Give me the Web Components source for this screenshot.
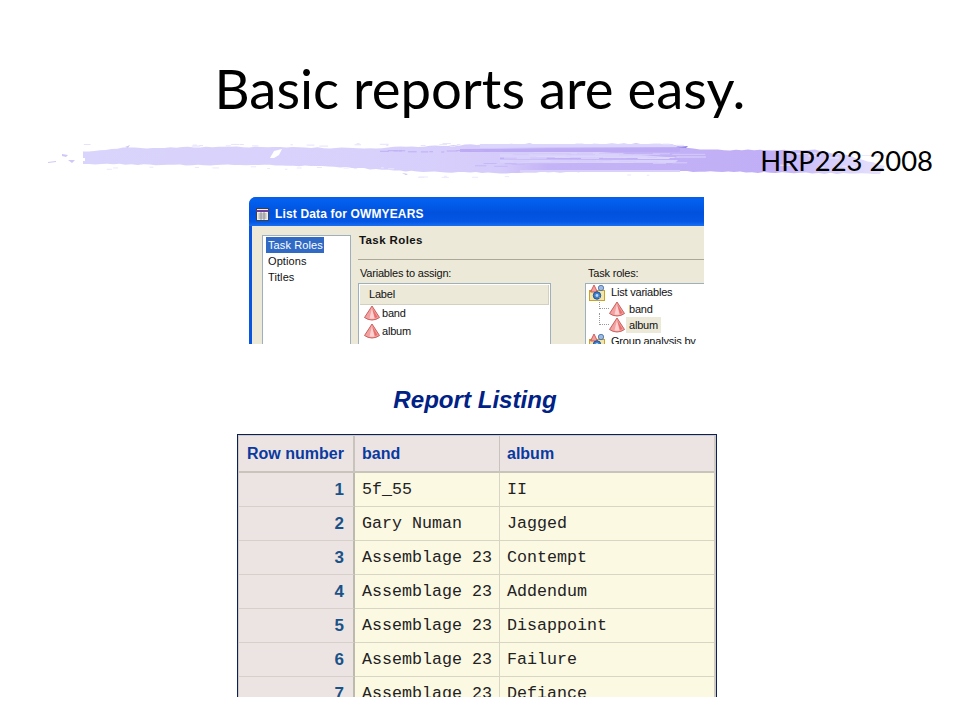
<!DOCTYPE html>
<html>
<head>
<meta charset="utf-8">
<title>Basic reports are easy.</title>
<style>
  html, body { margin: 0; padding: 0; background: #fff; }
</style>
</head>
<body>
<report-slide>
  <slide-header slot="header" heading="Basic reports are easy." tag="HRP223 2008"></slide-header>
  <list-dialog slot="dialog"></list-dialog>
  <report-listing slot="report"></report-listing>
</report-slide>

<script>
// Small seeded generator so the brush stroke comes out the same every run
function seeded(s) {
  return () => { s = (s * 16807) % 2147483647; return s / 2147483647; };
}

// Walks a polyline and roughens it, returns "x y" pairs
function rough(points, step, amount, rnd) {
  const out = [];
  for (let i = 0; i < points.length - 1; i++) {
    const [x0, y0] = points[i];
    const [x1, y1] = points[i + 1];
    const n = Math.max(1, Math.round(Math.abs(x1 - x0) / step));
    for (let k = 0; k < n; k++) {
      const t = k / n;
      out.push(`${(x0 + (x1 - x0) * t).toFixed(1)} ${(y0 + (y1 - y0) * t + (rnd() - 0.5) * amount).toFixed(1)}`);
    }
  }
  const last = points[points.length - 1];
  out.push(`${last[0]} ${last[1]}`);
  return out;
}

function brushMarkup() {
  const rnd = seeded(4711);
  const top = [[83, 152], [100, 150], [123, 148], [200, 147], [280, 147], [330, 148], [370, 148], [430, 146], [500, 144], [600, 144], [672, 144], [680, 147], [700, 150], [760, 150], [815, 150], [850, 156], [885, 166]];
  const bottom = [[880, 174], [800, 173], [740, 172], [640, 171], [560, 172], [500, 173], [440, 172], [400, 171], [340, 167], [270, 165], [180, 165], [83, 164]];
  const body = 'M' + rough(top, 6, 1.4, rnd).concat(rough(bottom, 6, 1.2, rnd)).join(' L') + ' Z';

  // dark strokes and pale streaks of the dry brush
  let strokes = '';
  const bar = (x, y, w, h, fill) => { strokes += `<rect x="${x.toFixed(1)}" y="${y.toFixed(1)}" width="${w.toFixed(1)}" height="${h}" fill="${fill}"/>`; };
  for (let x = 500; x < 675; x += 9 + rnd() * 14) {
    bar(x, 152.5 + rnd() * 2, 14 + rnd() * 22, 1, '#d4c9fa');
    bar(x + 4, 156 + rnd() * 2, 14 + rnd() * 20, 1, '#ded8fc');
    bar(x, 160 + rnd() * 3, 12 + rnd() * 18, 1, '#d6ccfa');
  }
  for (let x = 380; x < 500; x += 5 + rnd() * 8) {
    bar(x, 150 + rnd() * 1.5, 3 + rnd() * 8, 1, '#bfaef5');
  }
  for (let x = 475; x < 520; x += 5 + rnd() * 6) {
    bar(x, 163 + rnd() * 5, 6 + rnd() * 8, 1, '#c6b8f7');
  }
  for (let x = 780; x < 880; x += 6 + rnd() * 8) {
    bar(x, 152 + rnd() * 20, 6 + rnd() * 10, 1, '#ece8fd');
  }
  for (let i = 0; i < 44; i++) {
    const x = 60 + rnd() * 620;
    const above = rnd() > 0.5;
    const y = above ? 143 + rnd() * 3 : (x < 400 ? 166 : 174) + rnd() * 3;
    bar(x, y, 2 + rnd() * 7, 1, above ? '#e6e2fd' : '#ece9fe');
  }

  return `
    <defs>
      <linearGradient id="ink" gradientUnits="userSpaceOnUse" x1="83" x2="885" y1="0" y2="0">
        <stop offset="0" stop-color="#d9d4fc"/>
        <stop offset=".36" stop-color="#d8d1fc"/>
        <stop offset=".52" stop-color="#d6ccfb"/>
        <stop offset=".58" stop-color="#c4b3f6"/>
        <stop offset=".86" stop-color="#c0aff6"/>
        <stop offset=".92" stop-color="#d2c8fa"/>
        <stop offset="1" stop-color="#e8e3fd"/>
      </linearGradient>
    </defs>
    <path fill="url(#ink)" d="${body}"/>
    <path fill="#dcd6fc" d="M480 144 L672 144 L678 147 L480 148 Z"/>
    <path fill="#d9d2fb" d="M500 152 L600 152 L680 158 L675 163 L500 163 Z"/>
    <path fill="#c0aff6" d="M500 157.5 L680 158 L680 160 L500 159.5 Z"/>
    <path fill="#bcaaf5" d="M460 149 L680 148 L680 152 L460 152 Z"/>
    <path fill="#d9d1fb" d="M520 170 L680 170 L680 172 L520 172 Z"/>
    ${strokes}
    <path fill="#fff" d="M274 151 L282 149 L279 155 L274 158 L270 158 Z"/>
    <path fill="#fff" d="M74 158 L85 158 L85 161 L74 161 Z"/>
    <path fill="#cfc8f8" d="M48 162 L56 161 L56 162 L48 163 Z M62 154 L68 155 L66 157 L62 156 Z M68 160 L75 160 L72 163 Z M125 147 L130 145 L128 148 Z"/>
    <path fill="#8f7fe6" d="M676 147 L688 146 L686 148 Z"/>
    <path fill="#c9c1f6" d="M402 173 L408 174 L406 175 Z"/>`;
}

// Slide frame: stacks header, dialog shot and report, clips at the bottom edge
class ReportSlide extends HTMLElement {
  constructor() {
    super();
    this.attachShadow({ mode: 'open' }).innerHTML = `
      <style>
        :host { display: block; width: 960px; height: 720px; overflow: hidden; background: #fff; }
        .stack { display: flex; flex-direction: column; align-items: stretch; }
      </style>
      <div class="stack">
        <slot name="header"></slot>
        <slot name="dialog"></slot>
        <slot name="report"></slot>
      </div>`;
  }
}

// Title, brush stroke and course tag
class SlideHeader extends HTMLElement {
  constructor() {
    super();
    this.attachShadow({ mode: 'open' }).innerHTML = `
      <style>
        :host { display: block; height: 197px; position: relative; font-family: Lato, "Liberation Sans", sans-serif; color: #000; }
        h1 { margin: 0; padding-top: 53px; font-size: 54.5px; font-weight: 400; line-height: 70px; text-align: center; }
        svg { position: absolute; left: 0; top: 130px; filter: blur(.4px); }
        .tag { position: absolute; right: 27px; top: 143px; font-size: 27.4px; line-height: 36px; }
      </style>
      <svg width="960" height="60" viewBox="0 130 960 60">${brushMarkup()}</svg>
      <h1></h1>
      <div class="tag"></div>`;
    this.shadowRoot.querySelector('h1').textContent = this.getAttribute('heading');
    this.shadowRoot.querySelector('.tag').textContent = this.getAttribute('tag');
  }
}

const CONE = `<svg width="18" height="16" viewBox="0 0 18 16" aria-hidden="true">
  <path d="M9 1 L16.5 12.5 Q13 15 9 15 Q5 15 1.5 12.5 Z" fill="#f2a0a0" stroke="#c9605c" stroke-width="1"/>
  <path d="M9 3 L11.5 13.5 Q9 14.2 6.5 13.5 Z" fill="#fbd2d0"/>
  <path d="M9 3 L12 13 L14.5 12 Z" fill="#e96f6c"/>
</svg>`;

const GROUP = `<svg width="16" height="17" viewBox="0 0 16 17" aria-hidden="true">
  <rect x=".5" y="6.5" width="15" height="10" fill="#f3e6a8" stroke="#c9a227"/>
  <path d="M5 1 L8.5 8 H1.5 Z" fill="#f2a0a0" stroke="#c8423f" stroke-width=".8"/>
  <circle cx="12" cy="4" r="2.7" fill="#9db9df" stroke="#3f6aa8" stroke-width=".8"/>
  <circle cx="8" cy="11.5" r="3.7" fill="#3f83d0" stroke="#1f4f96"/>
  <circle cx="8" cy="11.5" r="1.4" fill="#bcd6f3"/>
</svg>`;

// SAS "List Data" dialog, cropped on the right and bottom like the source picture
class ListDialog extends HTMLElement {
  constructor() {
    super();
    this.attachShadow({ mode: 'open' }).innerHTML = `
      <style>
        :host { display: block; width: 455px; height: 147px; margin-left: 249px; overflow: hidden; font: 11px "Liberation Sans", Arial, sans-serif; letter-spacing: -.2px; color: #111; white-space: nowrap; }
        .win { height: 160px; border-radius: 7px 0 0 0; overflow: hidden; display: flex; flex-direction: column; background: #0a55e0; }
        .bar { height: 29px; flex: none; display: flex; align-items: center; gap: 5px; padding: 5px 0 0 6px; box-sizing: border-box;
               background: linear-gradient(#0a5ce6 0, #0361f0 10%, #0151dd 55%, #0457e4 85%, #1a6ff0 100%); color: #fff; font-weight: 700; font-size: 12px; letter-spacing: .15px; }
        .body { flex: 1; margin-left: 3px; background: #ece9d8; display: grid; grid-template-columns: 89px 1fr; column-gap: 7px; padding: 9px 0 0 10px; }
        .nav { background: #fff; border: 1px solid #9fb0bd; padding: 1px 0 0 3px; line-height: 16px; letter-spacing: .1px; }
        .nav div { padding-left: 2px; }
        .nav .on { background: #316ac5; color: #fff; width: 56px; }
        .head { font-weight: 700; font-size: 11.5px; height: 25px; margin-top: -1px; line-height: 12px; padding-left: 1px; border-bottom: 1px solid #aca899; margin-bottom: 6px; letter-spacing: .4px; }
        .cols { display: grid; grid-template-columns: 193px 1fr; column-gap: 34px; }
        .cap { line-height: 14px; height: 17px; padding-left: 2px; }
        .cols > div + div .cap { padding-left: 3px; }
        .box { background: #fff; border: 1px solid #9fb0bd; height: 90px; box-sizing: border-box; }
        .lab { margin: 1px; height: 19px; line-height: 19px; padding-left: 9px; background: #ece9d8; border-bottom: 1px solid #d4d0c0; border-right: 1px solid #d4d0c0; }
        .row { display: flex; align-items: center; gap: 1px; height: 18px; padding-left: 4px; }
        .list { margin-top: -2px; }
        .tree { border-right: 0; padding: 0 0 0 3px; line-height: 16px; }
        .t { display: flex; align-items: center; gap: 6px; height: 16px; }
        .t.top { height: 17px; padding-bottom: 1px; box-sizing: border-box; }
        .c { padding-left: 19px; position: relative; gap: 0; }
        .c span { padding: 0 3px; }
        .c::before { content: ""; position: absolute; left: 10px; top: -4px; height: 11px; width: 9px; border-left: 1px dotted #999; border-bottom: 1px dotted #999; }
        .c .sel { background: #ece9d8; }
      </style>
      <div class="win">
        <div class="bar">
          <svg width="15" height="15" viewBox="0 0 15 15" aria-hidden="true">
            <rect x="1.5" y="1.5" width="12" height="12" fill="#f2efe2" stroke="#39424e"/>
            <path d="M1.5 4h12" stroke="#6b3fa0" stroke-width="2"/>
            <path d="M3.5 7h8M3.5 9h8M3.5 11h8M6 5v8M9 5v8" stroke="#7d8796" stroke-width=".8"/>
          </svg>
          <span>List Data for OWMYEARS</span>
        </div>
        <div class="body">
          <div class="nav">
            <div class="on">Task Roles</div>
            <div>Options</div>
            <div>Titles</div>
          </div>
          <div>
            <div class="head">Task Roles</div>
            <div class="cols">
              <div>
                <div class="cap">Variables to assign:</div>
                <div class="box">
                  <div class="lab">Label</div>
                  <div class="list">
                    <div class="row">${CONE}<span>band</span></div>
                    <div class="row">${CONE}<span>album</span></div>
                  </div>
                </div>
              </div>
              <div>
                <div class="cap">Task roles:</div>
                <div class="box tree">
                  <div class="t top">${GROUP}<span>List variables</span></div>
                  <div class="t c">${CONE}<span>band</span></div>
                  <div class="t c">${CONE}<span class="sel">album</span></div>
                  <div class="t">${GROUP}<span>Group analysis by</span></div>
                </div>
              </div>
            </div>
          </div>
        </div>
      </div>`;
  }
}

const ROWS = [
  ['5f_55', 'II'],
  ['Gary Numan', 'Jagged'],
  ['Assemblage 23', 'Contempt'],
  ['Assemblage 23', 'Addendum'],
  ['Assemblage 23', 'Disappoint'],
  ['Assemblage 23', 'Failure'],
  ['Assemblage 23', 'Defiance'],
];

// SAS HTML output: caption and the cropped listing table
class ReportListing extends HTMLElement {
  constructor() {
    super();
    const rows = ROWS.map((r, i) => `
      <div class="num">${i + 1}</div><div class="cell">${r[0]}</div><div class="cell last">${r[1]}</div>`).join('');
    this.attachShadow({ mode: 'open' }).innerHTML = `
      <style>
        :host { display: block; font-family: "Liberation Sans", Arial, sans-serif; }
        h2 { margin: 0 0 0 -10px; padding-top: 42px; height: 48px; line-height: 28px; font-size: 24.1px; font-weight: 700; font-style: italic; text-align: center; color: #002185; }
        .clip { width: 480px; height: 263px; margin-left: 237px; overflow: hidden; }
        .tbl { border: 1px solid #0b1f5c; padding: 1px 2px 1px 1px; width: 480px; box-sizing: border-box; background: #cfcbc2;
               display: grid; grid-template-columns: 116px 145px 1fr; grid-template-rows: 37px; grid-auto-rows: 34px; }
        .th { background: #ece4e2; color: #0a3aa0; font-weight: 700; font-size: 16px; line-height: 35px; padding-left: 7px; box-sizing: border-box;
              border: 1px solid #c8c4bc; border-width: 0 1px 2px 0; }
        .th.first { padding-left: 8px; border-right-width: 2px; }
        .th.end { border-right: 0; }
        .num { background: #ece4e2; color: #1a5288; font-weight: 700; font-size: 17px; text-align: right; padding-right: 9px; line-height: 33px; border-bottom: 1px solid #d6d0c8; border-right: 2px solid #bdb9ae; box-sizing: border-box; }
        .cell { background: #fcf9e3; color: #222; font: 16.67px/33px "Liberation Mono", "Courier New", monospace; padding-left: 7px; border-bottom: 1px solid #d8d5c4; border-right: 1px solid #d8d5c4; box-sizing: border-box; white-space: pre; }
        .last { border-right: 0; }
      </style>
      <h2>Report Listing</h2>
      <div class="clip">
        <div class="tbl">
          <div class="th first">Row number</div><div class="th">band</div><div class="th end">album</div>
          ${rows}
        </div>
      </div>`;
  }
}

customElements.define('report-slide', ReportSlide);
customElements.define('slide-header', SlideHeader);
customElements.define('list-dialog', ListDialog);
customElements.define('report-listing', ReportListing);
</script>
</body>
</html>
